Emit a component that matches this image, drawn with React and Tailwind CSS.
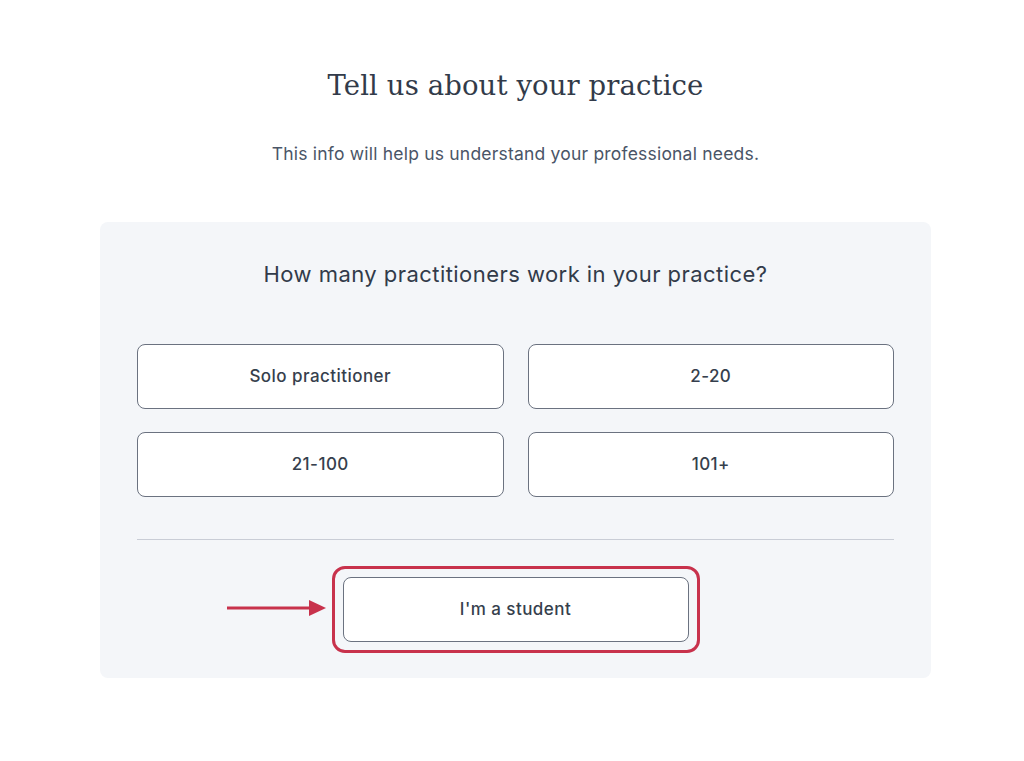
export default function App() {
  const sans = { fontFamily: '"Inter", "Open Sans", sans-serif' };
  return (
    <div className="w-[1024px] h-[761px] bg-white flex flex-col items-center pl-[7px]" style={sans}>
      <h1
        className="mt-[66px] h-[38px] leading-[38px] text-[#323b4a] tracking-[0.1px]"
        style={{ fontFamily: '"DejaVu Serif", "Liberation Serif", serif', fontWeight: 400, fontSize: '27.5px' }}
      >
        Tell us about your practice
      </h1>
      <p className="mt-[39px] h-[22px] leading-[22px] text-[17.5px] tracking-[0.2px] text-[#4a5567]">
        This info will help us understand your professional needs.
      </p>
      <div className="mt-[57px] w-[831px] h-[456px] rounded-[8px] bg-[#f4f6f9] flex flex-col items-center px-[37px]">
        <h2 className="mt-[38px] h-[28px] leading-[28px] text-[22px] tracking-[0.45px] text-[#323b4a]">
          How many practitioners work in your practice?
        </h2>
        <div className="mt-[56px] w-full grid grid-cols-2 gap-x-[24px] gap-y-[23px]">
          {['Solo practitioner', '2-20', '21-100', '101+'].map((t) => (
            <div
              key={t}
              className="h-[65px] bg-white border border-[#6b7280] rounded-[8px] flex items-center justify-center text-[17px] tracking-[0.45px] font-medium text-[#363f4d]"
            >
              {t}
            </div>
          ))}
        </div>
        <div className="mt-[42px] w-full h-px bg-[#c9cdd6]" />
        <div className="mt-[26px] relative">
          <svg className="absolute left-[-105px] top-[31px]" width="100" height="22" viewBox="0 0 100 22">
            <line x1="0" y1="11" x2="84" y2="11" stroke="#c8324c" strokeWidth="3" />
            <polygon points="82,3 99,11 82,19" fill="#c8324c" />
          </svg>
          <div className="w-[368px] h-[87px] rounded-[13px] border-[3px] border-[#c8324c] p-[8px] flex">
            <div className="flex-1 bg-white border border-[#6b7280] rounded-[8px] flex items-center justify-center text-[17px] tracking-[0.45px] font-medium text-[#363f4d]">
              I'm a student
            </div>
          </div>
        </div>
      </div>
    </div>
  );
}
